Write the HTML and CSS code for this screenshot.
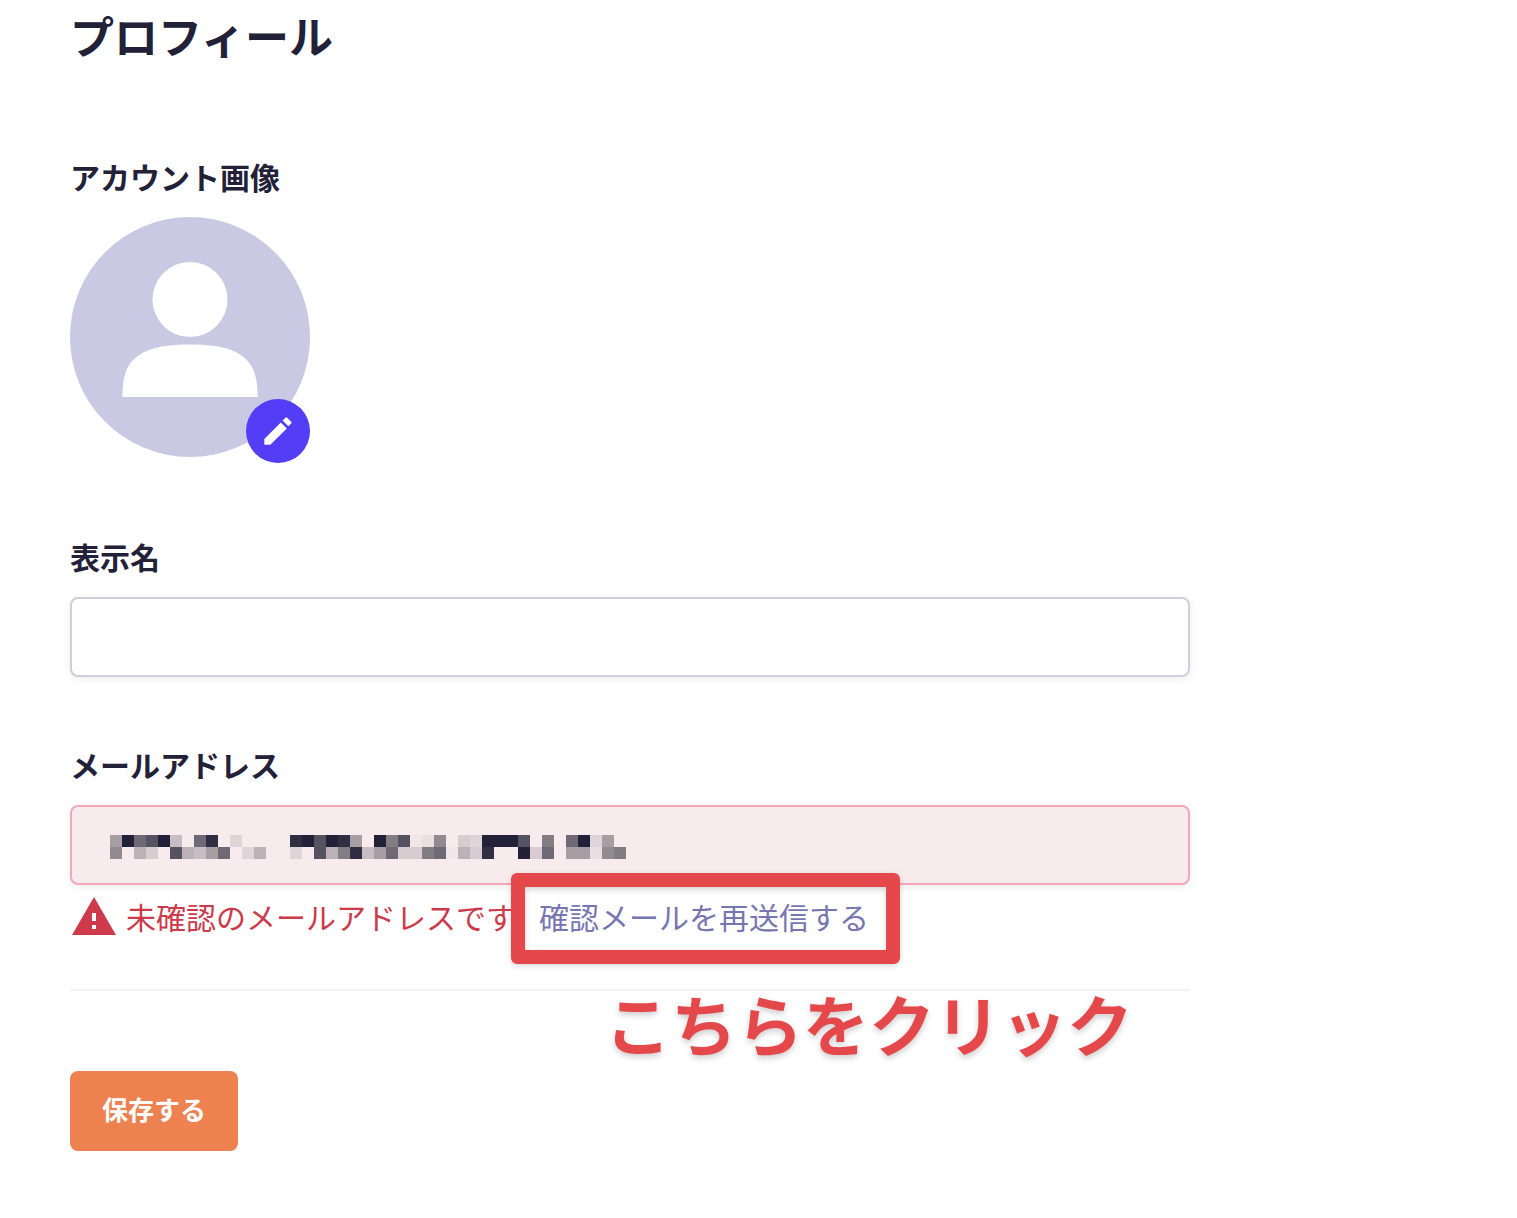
FILE: index.html
```html
<!DOCTYPE html>
<html lang="ja">
<head>
    <meta charset="UTF-8">
    <meta name="viewport" content="width=device-width, initial-scale=1.0">
    <title>プロフィール</title>
    <link rel="stylesheet" href="styles.css">
</head>
<body>
    <main class="profile">
        <h1>プロフィール</h1>

        <form class="profile-form">
            <section class="account-image">
                <h2 class="label">アカウント画像</h2>
                <div class="avatar">
                    <svg class="avatar-image" viewBox="0 0 240 240" aria-hidden="true">
                        <circle cx="120" cy="120" r="120" fill="#cac9e3"/>
                        <circle cx="120" cy="82.5" r="37.5" fill="#fff"/>
                        <path fill="#fff" d="M52.3 180C52.5 168 54 158 57 152C66 133 88 127.5 120 127.5S174 133 183 152C186 158 187.5 168 187.7 180Z"/>
                    </svg>
                    <button type="button" class="edit-button" aria-label="画像を編集">
                        <svg width="28" height="28" viewBox="0 0 28 28" fill="#fff" aria-hidden="true">
                            <path d="M0.3 22V27.7H6.3L22.8 11.4L16.8 5.4Z"/>
                            <path d="M18.6 3.6L21.5 0.7Q22.3 0 23.1 0.7L27.2 4.8Q28 5.6 27.2 6.4L24.4 9.3Z"/>
                        </svg>
                    </button>
                </div>
            </section>

            <div class="field">
                <label class="label" for="display-name">表示名</label>
                <input type="text" id="display-name" class="text-input">
            </div>

            <div class="field field-email">
                <label class="label" for="email">メールアドレス</label>
                <div class="email-box">
                    <input type="email" id="email" class="text-input text-input-error" aria-describedby="email-error">
                    <!-- masked address -->
                    <svg class="email-mask" viewBox="0 0 43 2" shape-rendering="crispEdges" fill="none" stroke-width="1" aria-hidden="true">
                        <path stroke="#222138" d="M1 .5h1M4 .5h1M16 .5h1M18 .5h1M22 .5h1M31 .5h3M39 .5h1M34 1.5h1"/>
                        <path stroke="#302e42" d="M8 .5h1M15 .5h1M19 .5h1M20 1.5h1M31 1.5h1"/>
                        <path stroke="#565261" d="M3 .5h1M17 .5h1M24 .5h1M34 .5h1M5 1.5h1M17 1.5h1"/>
                        <path stroke="#6e6974" d="M2 .5h1M7 .5h1M38 .5h1M9 1.5h1M23 1.5h1M27 1.5h1M36 1.5h1"/>
                        <path stroke="#827c83" d="M23 .5h1M36 .5h1M19 1.5h1M26 1.5h1M42 1.5h1"/>
                        <path stroke="#918b91" d="M27 .5h1M0 1.5h1M41 1.5h1"/>
                        <path stroke="#a79ea4" d="M0 .5h1M20 .5h1M41 .5h1M8 1.5h1M22 1.5h1M38 1.5h2"/>
                        <path stroke="#bcb1b7" d="M2 1.5h1M6 1.5h1M12 1.5h1M18 1.5h1M29 1.5h1"/>
                        <path stroke="#c8bdc2" d="M5 .5h1M7 1.5h1M21 1.5h1"/>
                        <path stroke="#d7ccd0" d="M29 .5h1M3 1.5h1M24 1.5h2M30 1.5h1M35 1.5h1"/>
                        <path stroke="#dfd4d8" d="M10 .5h1M30 .5h1M40 .5h1M11 1.5h1M15 1.5h1"/>
                        <path stroke="#e9dfe3" d="M26 .5h1M40 1.5h1"/>
                        <path stroke="#f2e6e8" d="M25 .5h1M28 1.5h1"/>
                    </svg>
                </div>
                <div class="message">
                    <svg class="warning-icon" width="44" height="38" viewBox="0 0 44 38" aria-hidden="true">
                        <path fill="#cc3a4b" d="M22 0L44 38H0Z"/>
                        <path fill="#fff" d="M20 16h4v8h-4zM20 28h4v4h-4z"/>
                    </svg>
                    <p id="email-error" class="error-text">未確認のメールアドレスです</p>
                    <a href="#" class="resend-link">確認メールを再送信する</a>
                </div>
                <p class="callout">こちらをクリック</p>
            </div>

            <hr>

            <button type="submit" class="save-button">保存する</button>
        </form>
    </main>
</body>
</html>
```
FILE: styles.css
```css
* {
    box-sizing: border-box;
}
body {
    margin: 0;
    background-color: #fff;
    color: #222138;
    font-family: "Noto Sans CJK JP", sans-serif;
    font-size: 30px;
    line-height: 44px;
}
.profile {
    max-width: 1260px;
    padding: 5px 70px 67px;
}
h1 {
    margin: 0 0 89px;
    font-size: 44px;
    line-height: 60px;
}
.label {
    display: block;
    margin: 0 0 19px;
    font-size: 30px;
    font-weight: bold;
    line-height: 44px;
}

.account-image {
    margin-bottom: 77px;
}
.avatar {
    position: relative;
    width: 240px;
    height: 240px;
}
.avatar-image {
    display: block;
    width: 100%;
}
.edit-button {
    position: absolute;
    right: 0;
    bottom: -6px;
    display: flex;
    align-items: center;
    justify-content: center;
    width: 64px;
    height: 64px;
    padding: 0;
    border: none;
    border-radius: 50%;
    background-color: #533df6;
}

.field {
    position: relative;
    margin-bottom: 65px;
}
.field-email {
    margin-bottom: 51px;
}
.text-input {
    display: block;
    width: 100%;
    height: 80px;
    padding: 0 38px;
    border: 2px solid #d0cddf;
    border-radius: 8px;
    background-color: #fff;
    box-shadow: 0 2px 8px rgba(0, 0, 0, 0.08);
    color: inherit;
    font: inherit;
}
.text-input-error {
    border-color: #f2a8b6;
    background-color: #f7ebed;
}
.email-box {
    position: relative;
}
.email-mask {
    position: absolute;
    top: 30px;
    left: 40px;
    width: 516px;
    height: 24px;
}

.message {
    display: flex;
    align-items: center;
    margin-top: 9px;
    padding-left: 2px;
}
.warning-icon {
    margin-right: 10px;
}
.error-text {
    margin: 0;
    color: #cc3a4b;
}
.resend-link {
    position: relative;
    margin-left: 23px;
    color: #7876b0;
    text-decoration: none;
}
/* red frame around the link */
.resend-link::after {
    content: "";
    position: absolute;
    top: -21px;
    right: -31px;
    bottom: -26px;
    left: -28px;
    border: 14px solid #e5484a;
    border-radius: 6px;
    box-shadow: 0 2px 6px rgba(0, 0, 0, 0.15), inset 0 2px 6px rgba(0, 0, 0, 0.15);
}
.callout {
    position: absolute;
    top: 234px;
    left: 535px;
    margin: 0;
    color: #e5484a;
    font-size: 66px;
    font-weight: bold;
    line-height: 92px;
    white-space: nowrap;
    text-shadow: 0 3px 6px rgba(0, 0, 0, 0.2);
}

hr {
    height: 2px;
    margin: 0 0 80px;
    border: none;
    background-color: #f3f2f8;
}
.save-button {
    display: block;
    height: 80px;
    padding: 0 32px 5px;
    border: none;
    border-radius: 8px;
    background-color: #ed8150;
    color: #fff;
    font-family: inherit;
    font-size: 26px;
    font-weight: bold;
}
```
